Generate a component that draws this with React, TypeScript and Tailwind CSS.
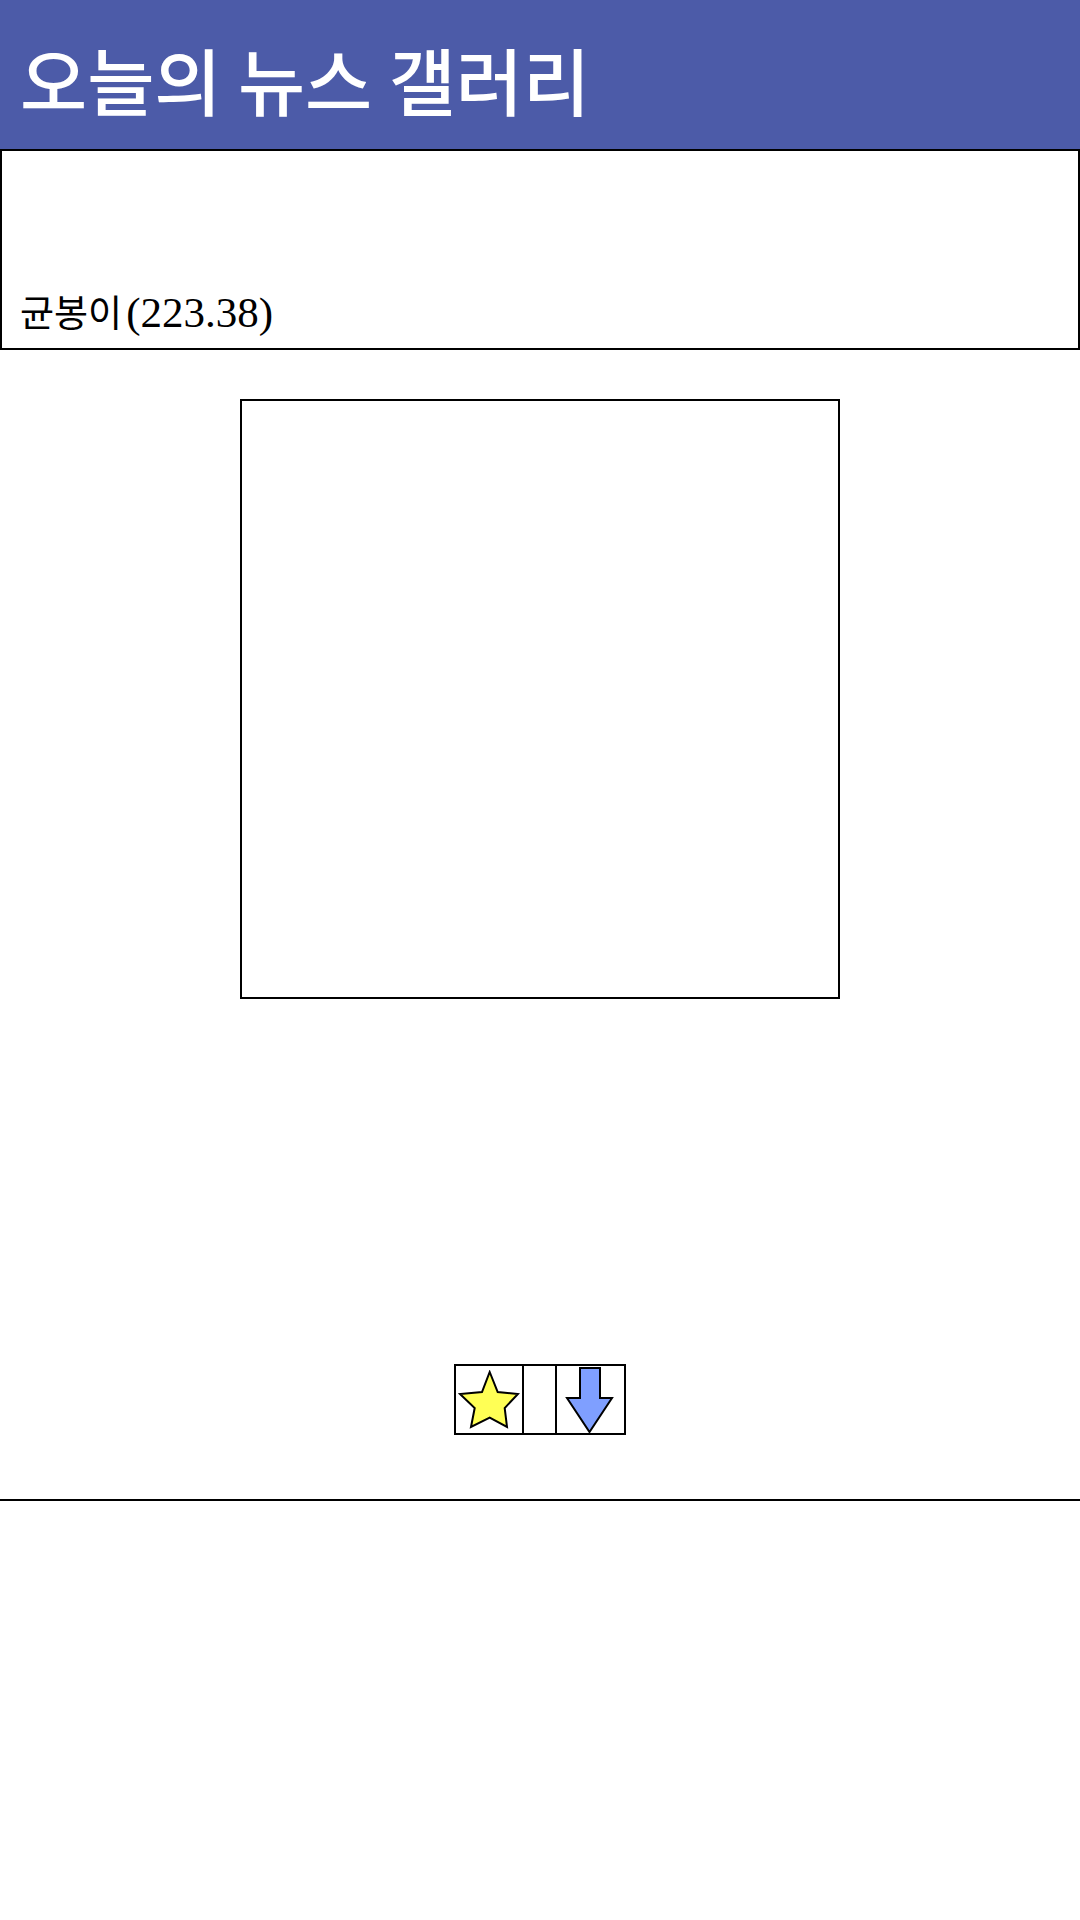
import React from "react";

export default function App() {
  return (
    <div className="w-[1080px] min-h-[1920px] bg-white">
      <header className="h-[149px] bg-[#4c5ba8] flex items-center px-[20px]">
        <h1 className="text-[73px] leading-none text-white font-medium font-['Noto_Sans_CJK_KR',sans-serif] mt-[8px]">
          오늘의 뉴스 갤러리
        </h1>
      </header>
      <div className="h-[201px] border-2 border-black flex items-end px-[18px] pb-[14px]">
        <div className="flex items-baseline leading-none text-black">
          <span className="text-[37px] font-['Noto_Sans_CJK_KR',sans-serif]">균봉이</span>
          <span className="ml-[4px] text-[43px] font-['Liberation_Serif','Noto_Sans_CJK_KR',serif]">(223.38)</span>
        </div>
      </div>
      <div className="flex justify-center pt-[49px]">
        <div className="w-[600px] h-[600px] border-2 border-black" />
      </div>
      <div className="flex justify-center mt-[365px]">
        <div className="flex h-[71px] border-2 border-black">
          <div className="w-[68px] border-r-2 border-black flex items-center justify-center">
            <svg width="62" height="59" viewBox="-2 -2 62 59">
              <polygon
                points="29.7,0 37.7,20 58,22 44.7,36 47,55 29.7,45.7 11,55 14.7,36 0,22 22,20"
                fill="#ffff55"
                stroke="#000"
                strokeWidth="2"
              />
            </svg>
          </div>
          <div className="w-[33px] border-r-2 border-black" />
          <div className="w-[67px] flex items-start justify-center">
            <svg width="67" height="67" viewBox="0 0 67 67">
              <polygon
                points="23,2 43,2 43,32 55,32 32.5,66 10,32 23,32"
                fill="#7f9fff"
                stroke="#000"
                strokeWidth="2"
              />
            </svg>
          </div>
        </div>
      </div>
      <div className="mt-[64px] border-t-2 border-black" />
    </div>
  );
}
